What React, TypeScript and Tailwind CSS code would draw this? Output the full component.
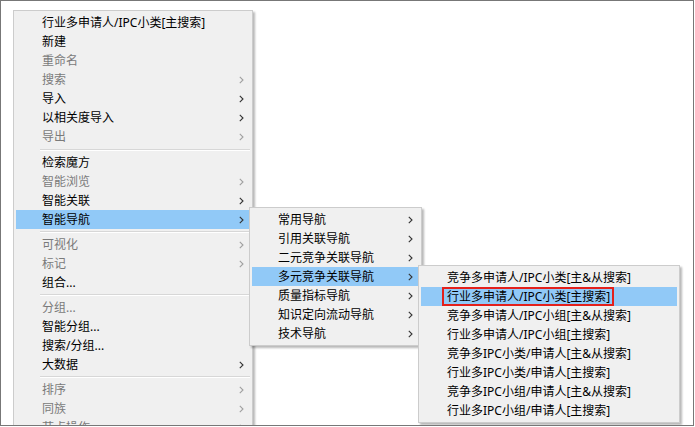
import React from "react";

type Item =
  | { type: "sep"; h?: number }
  | { type: "item"; label: string; disabled?: boolean; sub?: boolean; active?: boolean; boxed?: boolean };

const Chevron = ({ disabled }: { disabled?: boolean }) => (
  <svg width="5" height="8" viewBox="0 0 5 8" className={disabled ? "text-[#a0a0a0]" : "text-[#333333]"}>
    <path d="M0.8 0.8 L4 4 L0.8 7.2" fill="none" stroke="currentColor" strokeWidth="1.1" />
  </svg>
);

const Menu = ({ items, className }: { items: Item[]; className: string }) => (
  <div
    className={
      "absolute bg-[#f0f0f0] border border-[#cccccc] p-[2px] shadow-[2px_2px_2px_rgba(0,0,0,0.28)] " + className
    }
  >
    {items.map((it, i) =>
      it.type === "sep" ? (
        <div key={i} className={"flex items-center " + (it.h === 7 ? "h-[7px]" : "h-[6px]")}>
          <div className="ml-[24px] flex-1 h-[2px] border-t border-[#d7d7d7] border-b border-b-white" />
        </div>
      ) : (
        <div
          key={i}
          className={
            "h-[19px] flex items-center justify-between pl-[26px] pr-[6px] whitespace-nowrap " +
            (it.active ? "bg-[#91c9f7] " : "") +
            (it.disabled ? "text-[#7a7a7a]" : "text-black")
          }
        >
          {it.boxed ? (
            <span className="-ml-[5px] pl-[3px] pr-[2px] h-[19px] flex items-center border-2 border-[#e3201b]">
              {it.label}
            </span>
          ) : (
            <span>{it.label}</span>
          )}
          {it.sub ? <Chevron disabled={it.disabled} /> : null}
        </div>
      )
    )}
  </div>
);

const mainItems: Item[] = [
  { type: "item", label: "行业多申请人/IPC小类[主搜索]" },
  { type: "item", label: "新建" },
  { type: "item", label: "重命名", disabled: true },
  { type: "item", label: "搜索", disabled: true, sub: true },
  { type: "item", label: "导入", sub: true },
  { type: "item", label: "以相关度导入", sub: true },
  { type: "item", label: "导出", disabled: true, sub: true },
  { type: "sep", h: 7 },
  { type: "item", label: "检索魔方" },
  { type: "item", label: "智能浏览", disabled: true, sub: true },
  { type: "item", label: "智能关联", sub: true },
  { type: "item", label: "智能导航", sub: true, active: true },
  { type: "sep" },
  { type: "item", label: "可视化", disabled: true, sub: true },
  { type: "item", label: "标记", disabled: true, sub: true },
  { type: "item", label: "组合..." },
  { type: "sep" },
  { type: "item", label: "分组...", disabled: true },
  { type: "item", label: "智能分组..." },
  { type: "item", label: "搜索/分组..." },
  { type: "item", label: "大数据", sub: true },
  { type: "sep" },
  { type: "item", label: "排序", disabled: true, sub: true },
  { type: "item", label: "同族", disabled: true, sub: true },
  { type: "item", label: "节点操作", disabled: true, sub: true },
];

const sub1: Item[] = [
  { type: "item", label: "常用导航", sub: true },
  { type: "item", label: "引用关联导航", sub: true },
  { type: "item", label: "二元竞争关联导航", sub: true },
  { type: "item", label: "多元竞争关联导航", sub: true, active: true },
  { type: "item", label: "质量指标导航", sub: true },
  { type: "item", label: "知识定向流动导航", sub: true },
  { type: "item", label: "技术导航", sub: true },
];

const sub2: Item[] = [
  { type: "item", label: "竞争多申请人/IPC小类[主&从搜索]" },
  { type: "item", label: "行业多申请人/IPC小类[主搜索]", active: true, boxed: true },
  { type: "item", label: "竞争多申请人/IPC小组[主&从搜索]" },
  { type: "item", label: "行业多申请人/IPC小组[主搜索]" },
  { type: "item", label: "竞争多IPC小类/申请人[主&从搜索]" },
  { type: "item", label: "行业多IPC小类/申请人[主搜索]" },
  { type: "item", label: "竞争多IPC小组/申请人[主&从搜索]" },
  { type: "item", label: "行业多IPC小组/申请人[主搜索]" },
];

export default function App() {
  return (
    <div className="w-[695px] h-[427px] bg-white">
      <div className="relative w-[694px] h-[426px] overflow-hidden bg-white border border-[#777777] font-['Noto_Sans','Noto_Sans_CJK_SC',sans-serif] text-[12px] leading-[19px]">
        <Menu items={mainItems} className="left-[12px] top-[9px] w-[240px]" />
        <Menu items={sub1} className="left-[248px] top-[206px] w-[173px]" />
        <Menu items={sub2} className="left-[417px] top-[264px] w-[262px]" />
      </div>
    </div>
  );
}
